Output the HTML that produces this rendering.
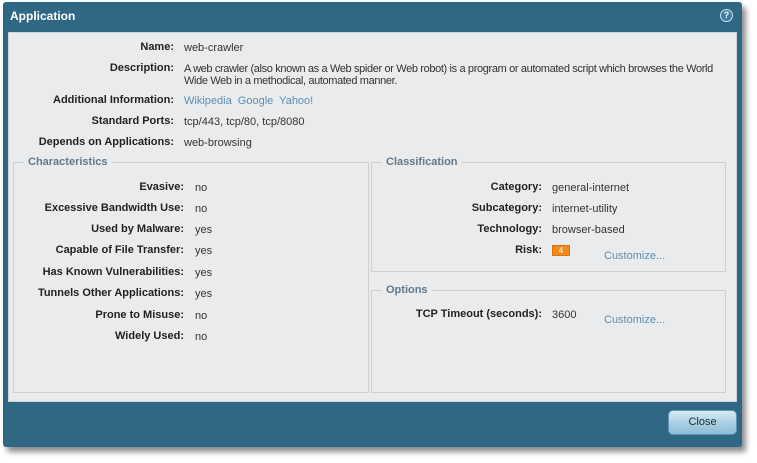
<!DOCTYPE html>
<html><head><meta charset="utf-8"><style>
*{margin:0;padding:0;box-sizing:border-box}
body{width:757px;height:463px;background:#fff;position:relative;overflow:hidden;font-family:"Liberation Sans","DejaVu Sans",sans-serif;font-size:11px;color:#222}
#dlg{position:absolute;left:3px;top:2px;width:739px;height:445px;background:#2f6784;border-radius:3px;box-shadow:4px 5px 6px rgba(0,0,0,.45)}
#title{position:absolute;left:10px;top:9px;color:#fff;font-weight:bold;font-size:12px}
#help{position:absolute;left:720px;top:9px;width:13px;height:13px;border-radius:50%;background:#fff;border:1px solid #cfe0ea}
#help::after{content:"?";position:absolute;left:0;top:0;width:11px;height:11px;border-radius:50%;background:#3a7ca3;color:#fff;font-weight:bold;font-size:9px;line-height:11px;text-align:center}
#panel{position:absolute;left:8px;top:32px;width:729px;height:370px;background:#eaebec;border:1px solid #d0d4d8}
.l,.v{position:absolute;white-space:nowrap}
.l{font-weight:bold;text-align:right;width:250px;color:#222}
.v{color:#333}
.a{color:#5b8fb5}
fieldset{position:absolute;border:1px solid #cfcfcf;background:transparent}
.lg{position:absolute;background:#eaebec;color:#647888;font-weight:bold;padding:0 4px;white-space:nowrap}
#btn{position:absolute;left:668px;top:410px;width:69px;height:25px;border-radius:5px;background:linear-gradient(#d7ebf5,#a8cde2 55%,#8fbfd8);border:1px solid #5d95b6;text-align:center;line-height:23px;color:#1d2c38;font-size:11px}
#risk{position:absolute;left:552px;top:245px;width:18px;height:11px;background:#f08a1c;border:1px solid #e07010;color:#fff;font-size:8px;line-height:9px;text-align:center}
</style></head><body>
<div id="dlg"></div>
<div id="title">Application</div>
<div id="help"></div>
<div id="panel"></div>

<div class="l" style="left:-76px;top:41px">Name:</div><div class="v" style="left:184px;top:42px">web-crawler</div>
<div class="l" style="left:-76px;top:62px">Description:</div><div class="v" style="left:184px;top:63px;line-height:12px;letter-spacing:-0.36px">A web crawler (also known as a Web spider or Web robot) is a program or automated script which browses the World<br>Wide Web in a methodical, automated manner.</div>
<div class="l" style="left:-76px;top:94px">Additional Information:</div><div class="v a" style="left:184px;top:95px">Wikipedia&nbsp; Google&nbsp; Yahoo!</div>
<div class="l" style="left:-76px;top:115px">Standard Ports:</div><div class="v" style="left:184px;top:116px">tcp/443, tcp/80, tcp/8080</div>
<div class="l" style="left:-76px;top:136px">Depends on Applications:</div><div class="v" style="left:184px;top:137px">web-browsing</div>

<fieldset style="left:13px;top:162px;width:356px;height:231px"></fieldset>
<div class="lg" style="left:24px;top:156px">Characteristics</div>
<div class="l" style="left:-66px;top:181px">Evasive:</div><div class="v" style="left:195px;top:182px">no</div>
<div class="l" style="left:-66px;top:202px">Excessive Bandwidth Use:</div><div class="v" style="left:195px;top:203px">no</div>
<div class="l" style="left:-66px;top:223px">Used by Malware:</div><div class="v" style="left:195px;top:224px">yes</div>
<div class="l" style="left:-66px;top:244px">Capable of File Transfer:</div><div class="v" style="left:195px;top:245px">yes</div>
<div class="l" style="left:-66px;top:266px">Has Known Vulnerabilities:</div><div class="v" style="left:195px;top:267px">yes</div>
<div class="l" style="left:-66px;top:287px">Tunnels Other Applications:</div><div class="v" style="left:195px;top:288px">yes</div>
<div class="l" style="left:-66px;top:309px">Prone to Misuse:</div><div class="v" style="left:195px;top:310px">no</div>
<div class="l" style="left:-66px;top:330px">Widely Used:</div><div class="v" style="left:195px;top:331px">no</div>

<fieldset style="left:371px;top:162px;width:355px;height:110px"></fieldset>
<div class="lg" style="left:382px;top:156px">Classification</div>
<div class="l" style="left:292px;top:181px">Category:</div><div class="v" style="left:552px;top:182px">general-internet</div>
<div class="l" style="left:292px;top:202px">Subcategory:</div><div class="v" style="left:552px;top:203px">internet-utility</div>
<div class="l" style="left:292px;top:223px">Technology:</div><div class="v" style="left:552px;top:224px">browser-based</div>
<div class="l" style="left:292px;top:244px">Risk:</div><div id="risk">4</div>
<div class="v a" style="left:604px;top:250px">Customize...</div>

<fieldset style="left:371px;top:290px;width:355px;height:103px"></fieldset>
<div class="lg" style="left:382px;top:284px">Options</div>
<div class="l" style="left:292px;top:308px">TCP Timeout (seconds):</div><div class="v" style="left:552px;top:309px">3600</div>
<div class="v a" style="left:604px;top:314px">Customize...</div>

<div id="btn">Close</div>
</body></html>
